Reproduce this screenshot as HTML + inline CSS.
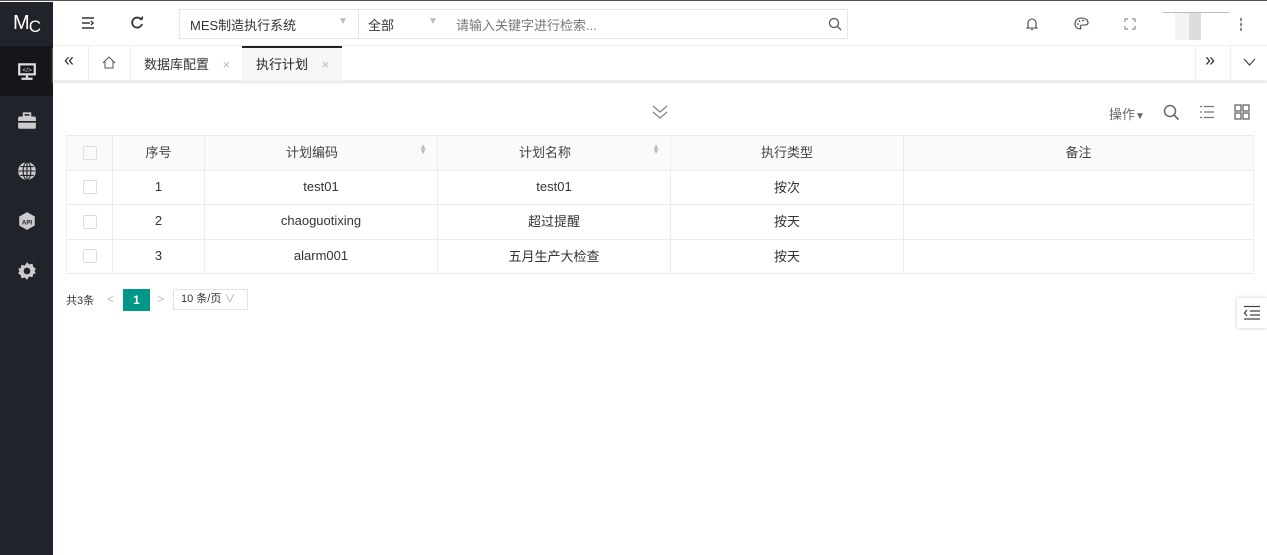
<!DOCTYPE html><html><head><meta charset="utf-8"><style>
*{box-sizing:border-box;margin:0;padding:0}
body{width:1267px;height:554px;overflow:hidden;background:#fff;font-family:"Liberation Sans","Noto Sans CJK SC",sans-serif;font-size:13px;color:#333;position:relative;border-top:1px solid #555}
.side{position:absolute;left:0;top:1px;width:53px;height:553px;background:#20232a}
.side .logo{height:44px;color:#fff;font-size:20px;text-align:center;line-height:42px;letter-spacing:-1px}
.side .it{height:50px;display:flex;align-items:center;justify-content:center}
.side .act{background:#14161b}
.top{position:absolute;left:53px;top:1px;right:0;height:44px;border-bottom:1px solid #eee}
.abs{position:absolute}
.tabs{position:absolute;left:53px;top:45px;right:0;height:35px;border-bottom:1px solid #eee;box-shadow:0 2px 2px #e6e6e6}
table{position:absolute;left:66px;top:134px;width:1188px;border-collapse:collapse;font-size:13px}
td{border:1px solid #ececec;text-align:center;height:34.5px;color:#333;padding-bottom:2px}
tr.h td{background:#fafafa;color:#444}
.cb{display:inline-block;width:14px;height:14px;border:1px solid #ddd;border-radius:2px;vertical-align:middle}
.sort{float:right;margin-right:10px;color:#bbb;font-size:8px;line-height:5px;margin-top:2px}
</style></head><body>
<div class="side">
<div class="logo">M<span style="font-size:17px;position:relative;top:3px">C</span></div>
<div class="it act"><svg width="20" height="20" viewBox="0 0 18 18"><rect x="1" y="2" width="16" height="11" fill="#ddd"/><rect x="3" y="4" width="12" height="7" fill="#14161b"/><text x="9" y="10" font-size="6" fill="#ddd" text-anchor="middle">&lt;/&gt;</text><rect x="8" y="13" width="2" height="3" fill="#ddd"/><rect x="4" y="15" width="10" height="2" fill="#ddd"/></svg></div>
<div class="it"><svg width="20" height="18" viewBox="0 0 18 16"><rect x="6" y="1" width="6" height="3" fill="none" stroke="#ccc" stroke-width="1.6"/><rect x="1" y="4" width="16" height="11" rx="1.5" fill="#ccc"/><rect x="1" y="8" width="16" height="1.5" fill="#20232a"/></svg></div>
<div class="it"><svg width="20" height="20" viewBox="0 0 18 18"><circle cx="9" cy="9" r="8" fill="#ccc"/><path d="M1 9h16M9 1v16M3 5h12M3 13h12" stroke="#20232a" stroke-width="1"/><ellipse cx="9" cy="9" rx="3.5" ry="8" fill="none" stroke="#20232a"/></svg></div>
<div class="it"><svg width="20" height="20" viewBox="0 0 18 18"><path d="M9 1l7 4v8l-7 4-7-4V5z" fill="#ccc"/><text x="9" y="12" font-size="5.5" fill="#20232a" text-anchor="middle" font-weight="bold">API</text></svg></div>
<div class="it"><svg width="20" height="20" viewBox="0 0 18 18"><path d="M9 1l2 2.2 2.9-.8.8 2.9L17 7l-1.3 2 1.3 2-2.3.7-.8 2.9-2.9-.8L9 17l-2-2.2-2.9.8-.8-2.9L1 11l1.3-2L1 7l2.3-.7.8-2.9 2.9.8z" fill="#ccc"/><circle cx="9" cy="9" r="3" fill="#20232a"/></svg></div>
</div>
<div class="top">
<svg class="abs" style="left:28px;top:15px" width="14" height="12"><path d="M1 1h12M1 6h8M1 11h12M10 4l2 2-2 2" stroke="#333" stroke-width="1.4" fill="none"/></svg>
<svg class="abs" style="left:77px;top:14px" width="14" height="14"><path d="M11.5 4A5 5 0 1 0 12 8" stroke="#333" stroke-width="1.8" fill="none"/><path d="M9 3.5h4V0" fill="#333"/></svg>
<div class="abs" style="left:126px;top:7px;width:669px;height:30px;border:1px solid #e5e5e5"></div>
<div class="abs" style="left:137px;top:13px;color:#333">MES制造执行系统</div>
<div class="abs" style="left:285px;top:14px;color:#bbb;font-size:10px">▼</div>
<div class="abs" style="left:305px;top:8px;width:1px;height:28px;background:#e5e5e5"></div>
<div class="abs" style="left:315px;top:13px">全部</div>
<div class="abs" style="left:375px;top:14px;color:#bbb;font-size:10px">▼</div>
<div class="abs" style="left:403px;top:13px;color:#777">请输入关键字进行检索...</div>
<svg class="abs" style="left:775px;top:15px" width="14" height="14"><circle cx="6" cy="6" r="4.5" stroke="#555" fill="none" stroke-width="1.3"/><path d="M9.5 9.5l3.5 3.5" stroke="#555" stroke-width="1.3"/></svg>
<svg class="abs" style="left:973px;top:15px" width="12" height="14"><path d="M2 10V6a4 4 0 0 1 8 0v4l1 1H1z" fill="none" stroke="#444" stroke-width="1.1"/><path d="M5 12.5h2" stroke="#444"/></svg>
<svg class="abs" style="left:1021px;top:15px" width="15" height="13"><path d="M7.5 1C3 1 1 4 1 7s2.5 5 5 5c1 0 1-1 .5-2s0-2 1.5-2h3c2 0 3-1 3-2.5C14 3 11 1 7.5 1z" fill="none" stroke="#444" stroke-width="1.1"/><circle cx="4" cy="7" r=".9" fill="#444"/><circle cx="5.5" cy="4" r=".9" fill="#444"/><circle cx="9" cy="3.5" r=".9" fill="#444"/></svg>
<svg class="abs" style="left:1071px;top:16px" width="12" height="12"><path d="M1 4V1h3M8 1h3v3M11 8v3H8M4 11H1V8" stroke="#777" fill="none"/></svg>
<div class="abs" style="left:1110px;top:10px;width:66px;height:1px;background:#bbb"></div>
<div class="abs" style="left:1122px;top:11px;width:14px;height:27px;background:#f3f3f3"></div>
<div class="abs" style="left:1136px;top:11px;width:12px;height:27px;background:#ddd"></div>
<div class="abs" style="left:1187px;top:15px;width:2px;height:14px;background:radial-gradient(#333 50%,transparent 55%) 0 0/2px 5px"></div>
</div>
<div class="tabs">
<div class="abs" style="left:11px;top:4px;font-size:18px;color:#333">«</div>
<div class="abs" style="left:35px;top:0;width:1px;height:35px;background:#eee"></div>
<svg class="abs" style="left:49px;top:10px" width="14" height="13"><path d="M1 7L7 1l6 6M3 5v7h8V5" fill="none" stroke="#555" stroke-width="1"/></svg>
<div class="abs" style="left:77px;top:0;width:1px;height:35px;background:#eee"></div>
<div class="abs" style="left:91px;top:8px;color:#333">数据库配置 <span style="color:#bbb;margin-left:10px">×</span></div>
<div class="abs" style="left:189px;top:0;width:100px;height:35px;background:#f6f6f6;border-top:2px solid #222"></div>
<div class="abs" style="left:203px;top:8px;color:#222">执行计划 <span style="color:#bbb;margin-left:10px">×</span></div>
<div class="abs" style="left:1142px;top:0;width:1px;height:35px;background:#eee"></div>
<div class="abs" style="left:1152px;top:4px;font-size:18px;color:#333">»</div>
<div class="abs" style="left:1177px;top:0;width:1px;height:35px;background:#eee"></div>
<svg class="abs" style="left:1190px;top:12px" width="13" height="9"><path d="M1 1l5.5 6L12 1" stroke="#444" fill="none" stroke-width="1.2"/></svg>
</div>
<svg class="abs" style="left:652px;top:104px" width="16" height="14"><path d="M1 1l7 6 7-6M1 7l7 6 7-6" stroke="#888" fill="none" stroke-width="1.3"/></svg>
<div class="abs" style="left:1109px;top:103px;color:#666">操作<span style="font-size:10px">▼</span></div>
<svg class="abs" style="left:1163px;top:103px" width="17" height="17"><circle cx="7" cy="7" r="5.5" stroke="#666" fill="none" stroke-width="1.5"/><path d="M11 11l4.5 4.5" stroke="#666" stroke-width="1.6"/></svg>
<svg class="abs" style="left:1199px;top:104px" width="16" height="14"><path d="M5 1.5h10M5 7h10M5 12.5h10" stroke="#777" stroke-width="1.2"/><path d="M1 1.5h2M1 7h2M1 12.5h2" stroke="#777" stroke-width="1.2"/></svg>
<svg class="abs" style="left:1234px;top:103px" width="16" height="16"><rect x="1" y="1" width="6" height="6" fill="none" stroke="#666" stroke-width="1.3"/><rect x="9" y="1" width="6" height="6" fill="none" stroke="#666" stroke-width="1.3"/><rect x="1" y="9" width="6" height="6" fill="none" stroke="#666" stroke-width="1.3"/><rect x="9" y="9" width="6" height="6" fill="none" stroke="#666" stroke-width="1.3"/></svg>
<table>
<tr class="h"><td style="width:46px"><span class="cb"></span></td><td style="width:92px">序号</td><td style="width:233px">计划编码<span class="sort">▲<br>▼</span></td><td style="width:233px">计划名称<span class="sort">▲<br>▼</span></td><td style="width:233px">执行类型</td><td>备注</td></tr>
<tr><td><span class="cb"></span></td><td>1</td><td>test01</td><td>test01</td><td>按次</td><td></td></tr>
<tr><td><span class="cb"></span></td><td>2</td><td>chaoguotixing</td><td>超过提醒</td><td>按天</td><td></td></tr>
<tr><td><span class="cb"></span></td><td>3</td><td>alarm001</td><td>五月生产大检查</td><td>按天</td><td></td></tr>
</table>
<div class="abs" style="left:66px;top:291px;font-size:11px;color:#333">共3条</div>
<div class="abs" style="left:107px;top:291px;color:#bbb;font-size:12px">&lt;</div>
<div class="abs" style="left:123px;top:288px;width:27px;height:22px;background:#009688;color:#fff;text-align:center;line-height:22px;font-size:12px;font-weight:bold">1</div>
<div class="abs" style="left:157px;top:291px;color:#bbb;font-size:12px">&gt;</div>
<div class="abs" style="left:173px;top:288px;width:75px;height:21px;border:1px solid #e2e2e2;font-size:11px;line-height:19px;padding-left:7px;color:#333">10 条/页 <span style="color:#aaa">∨</span></div>
<div class="abs" style="left:1237px;top:297px;width:30px;height:30px;background:#fff;box-shadow:0 0 4px #ccc"></div>
<svg class="abs" style="left:1243px;top:304px" width="18" height="15"><path d="M1 1.5h16M7 6h10M7 10h10M1 14h16M4 5L1.5 8 4 11" stroke="#444" fill="none" stroke-width="1.3"/></svg>
</body></html>
